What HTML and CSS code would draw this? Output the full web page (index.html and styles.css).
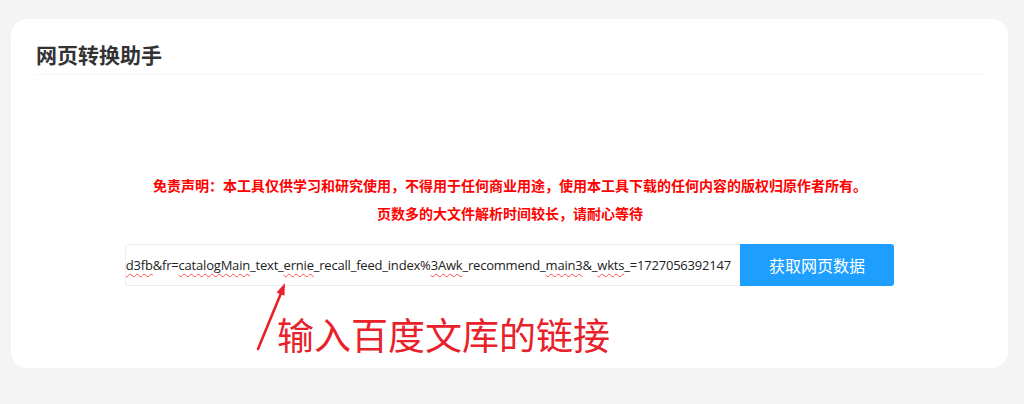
FILE: index.html
```html
<!DOCTYPE html>
<html lang="zh-CN">
<head>
<meta charset="utf-8">
<title>网页转换助手</title>
<link rel="stylesheet" href="styles.css">
</head>
<body>
<div class="card">
  <div class="card-header">网页转换助手</div>
  <div class="card-body">
    <p class="notice">免责声明：本工具仅供学习和研究使用，不得用于任何商业用途，使用本工具下载的任何内容的版权归原作者所有。</p>
    <p class="notice">页数多的大文件解析时间较长，请耐心等待</p>
    <div class="form-row">
      <div class="url-box"><span class="url">https://wenku.baidu.com/view/<span class="sp">4e0b3f1d0a1c59eef8c75fbfc77da2692bd3fb</span>&amp;fr=<span class="sp">catalogMain</span>_text_<span class="sp">ernie</span>_recall_feed_index%<span class="sp">3Awk</span>_recommend_<span class="sp">main3</span>&amp;_<span class="sp">wkts</span>_=1727056392147</span></div>
      <button class="btn" type="button">获取网页数据</button>
    </div>
    <div class="annotation">
      <svg class="arrow" width="40" height="75" viewBox="0 0 40 75">
        <line x1="5" y1="69" x2="28.5" y2="12" stroke="#e8212b" stroke-width="2.6" stroke-linecap="round"/>
        <polygon points="32,3 31.4,15.8 23.6,12.6" fill="#e8212b"/>
      </svg>
      <span class="anno-text">输入百度文库的链接</span>
    </div>
  </div>
</div>
</body>
</html>
```
FILE: styles.css
```css
html, body {
  margin: 0;
  padding: 0;
}
body {
  background: #f4f4f4;
  font-family: "Noto Sans", "Noto Sans CJK SC", sans-serif;
  width: 1024px;
  height: 404px;
  overflow: hidden;
  padding: 19px 16px 0 11px;
  box-sizing: border-box;
}
.card {
  background: #fff;
  border-radius: 16px;
  height: 349px;
  padding: 0 24px 0 25px;
  box-sizing: border-box;
}
.card-header {
  padding-top: 21px;
  padding-bottom: 6px;
  line-height: 28px;
  font-size: 21px;
  font-weight: 700;
  color: #333;
  border-bottom: 1px solid #f5f5f5;
  font-family: "Noto Sans CJK SC", sans-serif;
}
.card-body {
  padding-top: 96px;
  display: flex;
  flex-direction: column;
  align-items: center;
}
.notice {
  margin: 0;
  font-family: "Noto Sans CJK SC", sans-serif;
  font-size: 14px;
  line-height: 28px;
  font-weight: 700;
  color: #ff0000;
  text-align: center;
}
.form-row {
  margin-top: 17px;
  display: flex;
  width: 769px;
  height: 42px;
  margin-left: -1px;
}
.url-box {
  flex: 0 0 615px;
  box-sizing: border-box;
  border: 1px solid #eeeeee;
  border-right: none;
  border-radius: 3px 0 0 3px;
  display: flex;
  justify-content: flex-end;
  align-items: center;
  overflow: hidden;
  white-space: nowrap;
  padding: 0 9px 0 8px;
  font-size: 13px;
  color: #222;
  font-family: "Open Sans", sans-serif;
  letter-spacing: -0.2px;
}
.url {
  flex: none;
}
.sp {
  text-decoration: underline wavy #ff4d4d;
  text-decoration-thickness: 1px;
  text-underline-offset: 3px;
}
.btn {
  flex: 0 0 154px;
  border: none;
  border-radius: 0 3px 3px 0;
  background: #1e9fff;
  color: #fff;
  font-family: "Noto Sans CJK SC", sans-serif;
  font-size: 16px;
  padding: 0;
  margin: 0;
}
.annotation {
  position: relative;
  width: 769px;
  margin-top: 28px;
  margin-left: -1px;
  line-height: 40px;
}
.arrow {
  position: absolute;
  left: 128px;
  top: -34px;
}
.anno-text {
  display: block;
  padding-left: 152px;
  font-family: "Noto Sans CJK SC", sans-serif;
  font-size: 37px;
  color: #e8212b;
}
```
